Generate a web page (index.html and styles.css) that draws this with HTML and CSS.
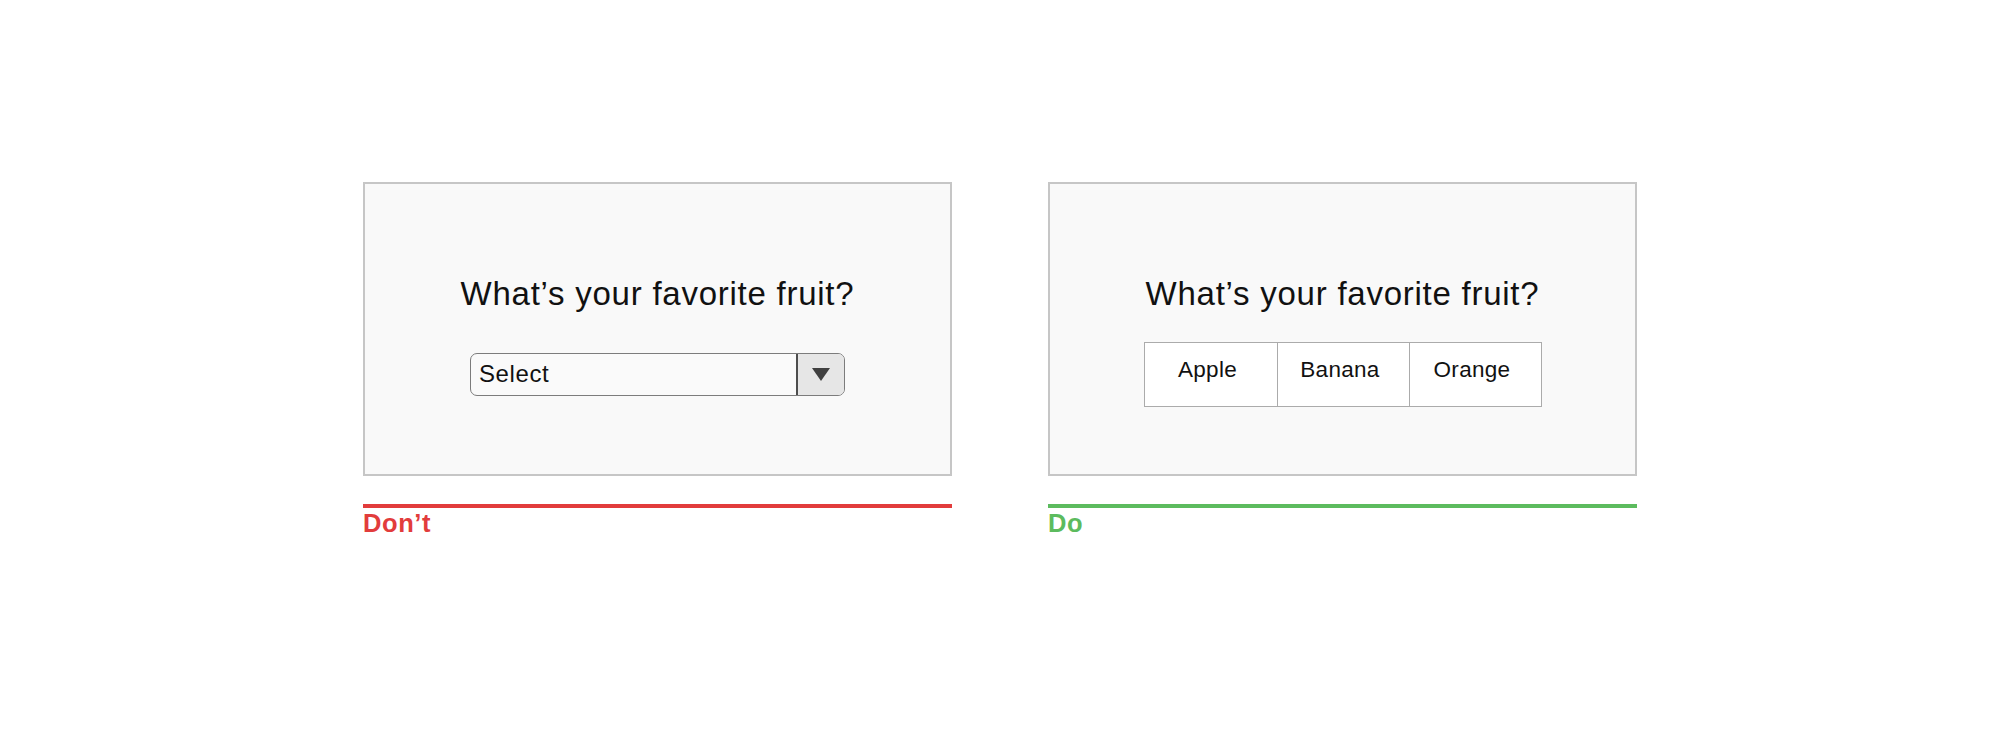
FILE: index.html
```html
<!DOCTYPE html>
<html lang="en">
<head>
<meta charset="utf-8">
<title>Do / Don't – favorite fruit</title>
<link rel="stylesheet" href="styles.css">
</head>
<body>
<main class="examples">
  <section class="example">
    <div class="card">
      <h2 class="question">What’s your favorite fruit?</h2>
      <div class="control">
        <div class="select">
          <span class="select-text">Select</span>
          <span class="select-arrow"><span class="triangle"></span></span>
        </div>
      </div>
    </div>
    <div class="verdict verdict-dont">
      <span class="verdict-label">Don’t</span>
    </div>
  </section>
  <section class="example">
    <div class="card">
      <h2 class="question">What’s your favorite fruit?</h2>
      <div class="control">
        <div class="segmented">
          <span class="segment">Apple</span>
          <span class="segment">Banana</span>
          <span class="segment">Orange</span>
        </div>
      </div>
    </div>
    <div class="verdict verdict-do">
      <span class="verdict-label">Do</span>
    </div>
  </section>
</main>
</body>
</html>
```

FILE: styles.css
```css
* { box-sizing: border-box; }

html, body {
  margin: 0;
  padding: 0;
  background: #ffffff;
}

body {
  font-family: "Liberation Sans", Arial, Helvetica, sans-serif;
  color: #111111;
}

.examples {
  display: flex;
  justify-content: center;
  gap: 96px;
  padding-top: 182px;
}

.example {
  width: 589px;
  display: flex;
  flex-direction: column;
}

.card {
  height: 294px;
  background: #f9f9f9;
  border: 2px solid #c6c6c6;
  display: flex;
  flex-direction: column;
  align-items: center;
  padding-top: 93px;
}

.question {
  margin: 0;
  font-size: 33px;
  line-height: 33px;
  font-weight: 400;
  letter-spacing: 0.75px;
  color: #111111;
}

.control {
  margin-top: 29px;
  height: 70px;
  display: flex;
  align-items: center;
  justify-content: center;
}

/* Dropdown (Don't) */
.select {
  width: 375px;
  height: 43px;
  border: 1.5px solid #7c7c7c;
  border-radius: 7px;
  background: #fafafa;
  display: flex;
  align-items: stretch;
  overflow: hidden;
}

.select-text {
  flex: 1;
  display: flex;
  align-items: center;
  padding-left: 8px;
  font-size: 24px;
  line-height: 24px;
  letter-spacing: 0.6px;
  color: #111111;
}

.select-arrow {
  width: 48px;
  border-left: 2px solid #4d4d4d;
  background: #e6e6e6;
  display: flex;
  align-items: center;
  justify-content: center;
}

.triangle {
  width: 0;
  height: 0;
  border-left: 9px solid transparent;
  border-right: 9px solid transparent;
  border-top: 13px solid #404040;
  margin-top: 1px;
}

/* Segmented buttons (Do) */
.segmented {
  width: 398px;
  height: 65px;
  display: grid;
  grid-template-columns: repeat(3, 1fr);
  border: 1.5px solid #ababab;
  background: #ffffff;
}

.segment {
  display: flex;
  align-items: center;
  justify-content: center;
  padding-bottom: 9px;
  padding-right: 6px;
  font-size: 22.5px;
  line-height: 24px;
  letter-spacing: 0.3px;
  color: #111111;
}

.segment + .segment {
  border-left: 1.5px solid #ababab;
}

/* Verdict labels */
.verdict {
  margin-top: 28px;
  border-top: 4px solid;
  padding-top: 3px;
}

.verdict-label {
  display: block;
  font-size: 25.5px;
  line-height: 25px;
  font-weight: 700;
  letter-spacing: 0.6px;
}

.verdict-dont {
  border-top-color: #e23c3c;
  color: #e23c3c;
}

.verdict-do {
  border-top-color: #5cbb5e;
  color: #5cbb5e;
}
```
